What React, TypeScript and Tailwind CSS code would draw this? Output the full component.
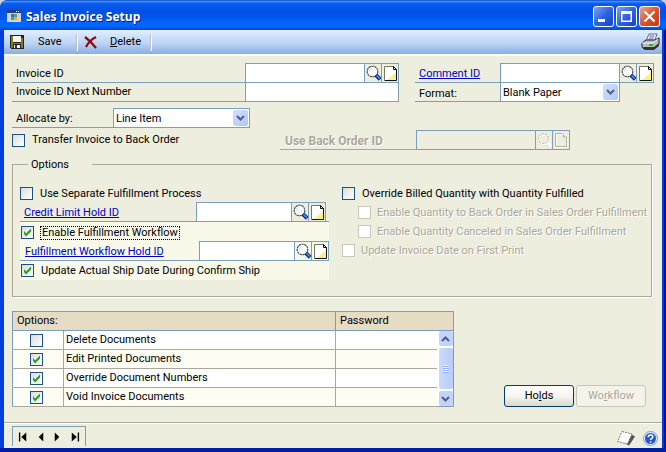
import type { ReactNode } from "react";

function LookupIcon() {
  return (
    <svg width="15" height="16" viewBox="0 0 15 16" aria-hidden="true">
      <circle cx="6.5" cy="6.5" r="5.3" fill="#fff" stroke="#3c4150" strokeWidth="1.1" strokeDasharray="2.4 .5" />
      <path d="M3.5 6.5a3 3 0 0 1 2.5-3" stroke="#c4d8ee" fill="none" />
      <path d="M10 10.200l4.200 4.200" stroke="#0a2a80" strokeWidth="4" />
      <path d="M10.600 10.400l3.200 3.200" stroke="#3f8fe8" strokeWidth="1.800" />
    </svg>
  );
}

function NoteIcon() {
  return (
    <svg width="13" height="15" viewBox="0 0 13 15" aria-hidden="true">
      <path d="M.5 .5h8l4 4v10H.5z" fill="#fff" />
      <path d="M12 6v8H3z" fill="#fbf08a" />
      <path d="M.5 14V.5h8" stroke="#77776a" fill="none" />
      <path d="M8.500 .5h1l3 3v11H.5M9.500 .5v3h3" stroke="#111" fill="none" />
    </svg>
  );
}

function DisabledLookupIcon() {
  return (
    <svg width="15" height="16" viewBox="0 0 15 16" aria-hidden="true">
      <circle cx="7.5" cy="7.5" r="5" fill="none" stroke="#fff" />
      <circle cx="6.5" cy="6.5" r="5" fill="none" stroke="#b3b09c" strokeDasharray="2 1.5" />
      <path d="M11 11l3 3" stroke="#fff" strokeWidth="2" />
    </svg>
  );
}

function DisabledNoteIcon() {
  return (
    <svg width="13" height="15" viewBox="0 0 13 15" aria-hidden="true">
      <path d="M1.500 13.500V1.500h7M12.500 5v9.500H1" stroke="#fff" fill="none" />
      <path d="M.5 13.500V.5h7M11.500 4v9.500H1M8.500 1v3h3" stroke="#b3b09c" fill="none" />
    </svg>
  );
}

function LookupButtons({ name, disabled = false }: { name: string; disabled?: boolean }) {
  return (
    <>
      <button type="button" disabled={disabled} aria-label={`Look up ${name}`} className="flex w-[17px] shrink-0 items-center justify-center border-l border-[#7f9db9]">
        {disabled ? <DisabledLookupIcon /> : <LookupIcon />}
      </button>
      <button type="button" disabled={disabled} aria-label={`Note for ${name}`} className="flex w-[18px] shrink-0 items-center justify-center border-x border-[#7f9db9]">
        {disabled ? <DisabledNoteIcon /> : <NoteIcon />}
      </button>
    </>
  );
}

type CheckProps = { label: string; checked?: boolean; disabled?: boolean; focused?: boolean };

function Box({ id, label, checked = false, disabled = false }: { id?: string; label?: string; checked?: boolean; disabled?: boolean }) {
  return (
    <span className="grid size-[13px] shrink-0">
      <input
        id={id}
        type="checkbox"
        aria-label={label}
        defaultChecked={checked}
        disabled={disabled}
        className="peer col-start-1 row-start-1 size-[13px] appearance-none border border-[#1c5180] bg-linear-to-br from-[#dcdcd7] to-white outline-none disabled:border-[#cac8bb] disabled:from-white"
      />
      <svg viewBox="0 0 13 13" aria-hidden="true" className="pointer-events-none invisible col-start-1 row-start-1 size-[13px] peer-checked:visible">
        <path d="M3 5v3l2 2.500 5-5v-3l-5 5z" fill="#21a121" />
      </svg>
    </span>
  );
}

function Check({ label, checked, disabled, focused }: CheckProps) {
  const id = label.toLowerCase().replace(/ /g, "-");
  return (
    <div className="flex h-[19px] items-center gap-1.5">
      <Box id={id} checked={checked} disabled={disabled} />
      <label
        htmlFor={id}
        className={
          disabled
            ? "text-[#aca899] [text-shadow:1px_1px_0_#fff]"
            : focused
              ? "border border-dotted border-black px-px leading-3"
              : "px-px"
        }
      >
        {label}
      </label>
    </div>
  );
}

function Select({ id, value }: { id: string; value: string }) {
  return (
    <span className="grid flex-1 border-x border-[#7f9db9] bg-white">
      <select id={id} className="peer col-start-1 row-start-1 w-full appearance-none bg-transparent pt-px pl-0.5 outline-none">
        <option>{value}</option>
      </select>
      <span className="pointer-events-none col-start-1 row-start-1 mr-px flex h-4 w-[15px] items-center justify-center self-center justify-self-end rounded-xs bg-linear-to-br from-[#d3e0fd] to-[#b1c6f5]">
        <svg width="9" height="6" viewBox="0 0 9 6" aria-hidden="true">
          <path d="M1 1l3.500 3.500L8 1" fill="none" stroke="#4d6185" strokeWidth="2" />
        </svg>
      </span>
    </span>
  );
}

const textBox = "min-w-0 flex-1 border-l border-[#7f9db9] bg-white px-1 outline-none";
const firstRow = "flex h-5 border-b border-[#7f9db9]";
const topEdge = "flex min-w-0 flex-1 border-t border-[#7f9db9]";
const link = "text-[#0000c8] underline underline-offset-1";

function WindowButton({ label, close = false, children }: { label: string; close?: boolean; children: ReactNode }) {
  return (
    <button
      type="button"
      aria-label={label}
      className={
        close
          ? "flex size-[21px] items-center justify-center rounded-[3px] border border-white bg-linear-to-br from-[#f0a088] via-[#e0502c] to-[#c03a14]"
          : "flex size-[21px] items-center justify-center rounded-[3px] border border-white bg-linear-to-br from-[#7da2f4] via-[#2f62e0] to-[#1543c4]"
      }
    >
      <svg width="19" height="19" viewBox="0 0 19 19" aria-hidden="true">{children}</svg>
    </button>
  );
}

function ToolSeparator() {
  return <span className="h-[17px] w-0.5 border-r border-white bg-[#b9c3c8]" />;
}

const documents = [
  { name: "Delete Documents", on: false },
  { name: "Edit Printed Documents", on: true },
  { name: "Override Document Numbers", on: true },
  { name: "Void Invoice Documents", on: true },
];

const records = [
  { name: "First record", d: "M1 1h1.500v10H1zM9 1v10L3.500 6z" },
  { name: "Previous record", d: "M9 1v10L4 6z" },
  { name: "Next record", d: "M3 1v10l5-5z" },
  { name: "Last record", d: "M9.500 1H11v10H9.500zM3 1v10l5.500-5z" },
];

export default function App() {
  return (
    <div className="min-h-screen bg-[#c9cdd6] font-['Roboto','Liberation_Sans',sans-serif] text-[11px] leading-[14px] text-black">
      <div className="flex min-h-screen flex-col overflow-hidden rounded-t-lg bg-[#003fdf]">
        <header className="flex h-[30px] items-center bg-[linear-gradient(180deg,#0a49c8_0%,#3a8cf8_5%,#0a5cec_12%,#0050e6_35%,#0055ee_60%,#0066ff_75%,#0066ff_88%,#0046d0_100%)] pr-1.5 pl-[7px]">
          <svg width="14" height="12" viewBox="0 0 14 12" aria-hidden="true" shapeRendering="crispEdges" className="mt-0.5">
            <path d="M0 0h14v12H0z" fill="#d8d4c4" />
            <path d="M0 0h14v3H0z" fill="#2b3c78" />
            <path d="M9 1h1v1H9zM11 1h1v1h-1z" fill="#fff" />
            <path d="M4 4h3v3H4z" fill="#2878c8" />
            <path d="M7 4h3v3H7z" fill="#4aa0b0" />
            <path d="M4 7h3v3H4z" fill="#3c9ad8" />
            <path d="M7 7h3v3H7z" fill="#e8b020" />
          </svg>
          <h1 className="ml-[5px] flex-1 pt-1 font-['Open_Sans','Liberation_Sans',sans-serif] text-xs leading-4 font-bold text-white [text-shadow:1px_1px_0_#0a1883]">
            Sales Invoice Setup
          </h1>
          <div className="flex gap-0.5 pt-0.5">
            <WindowButton label="Minimize">
              <path d="M4 12h7v3H4z" fill="#fff" />
            </WindowButton>
            <WindowButton label="Maximize">
              <path d="M4 4h11v11H4zM5.500 7v6.500h8V7z" fill="#fff" fillRule="evenodd" />
            </WindowButton>
            <WindowButton label="Close" close>
              <path d="M4.500 4.500l10 10M14.500 4.500l-10 10" stroke="#fff" strokeWidth="2.200" />
            </WindowButton>
          </div>
        </header>

        <div className="flex flex-1 flex-col border-b-4 border-[#001fa8] px-1 shadow-[inset_-2px_0_0_#00148c]">
          <div className="flex flex-1 flex-col bg-[#eeeedf]">
            <div role="toolbar" aria-label="Commands" className="flex h-[26px] items-center border-b-2 border-white bg-linear-to-b from-[#e2effe] via-[#bcd3f5] via-55% to-[#8caede] px-1.5">
              <button type="button" className="flex w-[66px] items-center">
                <svg width="14" height="14" viewBox="0 0 14 14" aria-hidden="true" shapeRendering="crispEdges">
                  <path d="M0 0h14v14H1L0 13z" fill="#222" />
                  <path d="M1 1h2v12H1zM11 3h2v10h-2zM2 8h10v1H2z" fill="#7c7c20" />
                  <path d="M3 1h8v6H3z" fill="#f2f2ee" />
                  <path d="M4 10h6v3H4z" fill="#f2f2ee" />
                  <path d="M5 10h2v3H5z" fill="#333" />
                </svg>
                <span className="pl-3.5">Save</span>
              </button>
              <ToolSeparator />
              <button type="button" className="flex w-[72px] items-center pl-1.5">
                <svg width="14" height="13" viewBox="0 0 14 13" aria-hidden="true">
                  <path d="M1 1c4 3 8 7 11 11M12 1C8 3 4 7 2 11" stroke="#8c0a0a" strokeWidth="2.200" fill="none" />
                </svg>
                <span className="pl-3"><u>D</u>elete</span>
              </button>
              <ToolSeparator />
              <button type="button" aria-label="Print" className="-mr-1 ml-auto">
                <svg width="19" height="18" viewBox="0 0 19 18" aria-hidden="true">
                  <path d="M5 8l3-7h8l-3 8z" fill="#fff" stroke="#234" strokeWidth=".7" />
                  <path d="M8.500 3h5M7.800 5h5M7 7h5" stroke="#3b62c8" />
                  <path d="M1 10l4-3h9l4-2v6l-5 5H3l-2-2z" fill="#b8bcc0" stroke="#222" />
                  <path d="M1 10h11l5-4" fill="none" stroke="#f4f4f4" />
                  <path d="M2 14h11l5-4v3l-5 4H4z" fill="#333" />
                  <path d="M8 12h4" stroke="#1fb81f" strokeWidth="2" />
                </svg>
              </button>
            </div>

            <main className="flex flex-1 flex-col px-2 pt-[7px]">
              <div className="flex items-start gap-4">
                <div className="min-w-0 flex-1">
                  <div className={firstRow}>
                    <label htmlFor="invoice" className="w-[233px] pt-1 pl-1">Invoice ID</label>
                    <div className={topEdge}>
                      <input id="invoice" className={textBox} />
                      <LookupButtons name="Invoice ID" />
                    </div>
                  </div>
                  <div className="flex h-[19px] border-b border-[#7f9db9]">
                    <label htmlFor="next" className="w-[233px] pt-0.5 pl-1">Invoice ID Next Number</label>
                    <input id="next" className="min-w-0 flex-1 border-x border-[#7f9db9] bg-white px-1 outline-none" />
                  </div>
                </div>
                <div className="w-[239px] shrink-0">
                  <div className={firstRow}>
                    <label htmlFor="comment" className="w-[85px] pt-1 pl-1"><a href="#comment" className={link}>Comment ID</a></label>
                    <div className={topEdge}>
                      <input id="comment" className={textBox} />
                      <LookupButtons name="Comment ID" />
                    </div>
                  </div>
                  <div className="mr-[34px] flex h-[19px] border-b border-[#7f9db9]">
                    <label htmlFor="format" className="w-[85px] pt-1 pl-1">Format:</label>
                    <Select id="format" value="Blank Paper" />
                  </div>
                </div>
              </div>

              <div className="mt-1.5 flex h-5 w-[238px] border-b border-[#7f9db9]">
                <label htmlFor="allocate" className="w-[101px] pt-1 pl-1">Allocate by:</label>
                <div className={topEdge}>
                  <Select id="allocate" value="Line Item" />
                </div>
              </div>

              <div className="mt-0.5 flex items-center">
                <div className="w-[268px]">
                  <Check label="Transfer Invoice to Back Order" />
                </div>
                <div className="flex h-5 w-[290px] border-b border-[#aca899]">
                  <label htmlFor="backorder" className="w-[136px] pt-1 pl-[5px] text-xs leading-[14px] font-bold text-[#aca899] [text-shadow:1px_1px_0_#fff]">
                    Use Back Order ID
                  </label>
                  <div className="-mb-px flex min-w-0 flex-1 border-y border-[#7f9db9]">
                    <input id="backorder" disabled className="min-w-0 flex-1 border-l border-[#7f9db9] bg-transparent px-1" />
                    <LookupButtons name="Back Order ID" disabled />
                  </div>
                </div>
              </div>

              <fieldset className="mt-[7px] mr-0.5 flex border border-[#aca899] pt-3 pb-4 pl-[7px] shadow-[1px_1px_0_#fff]">
                <legend className="ml-2 w-16 bg-[#eeeedf] pl-[3px] leading-[15px]">Options</legend>
                <div className="w-[309px]">
                  <Check label="Use Separate Fulfillment Process" />
                  <div className="-mt-px flex h-5 border-b border-[#7f9db9] pr-[3px]">
                    <label htmlFor="credit" className="w-44 pt-1 pl-1"><a href="#credit" className={link}>Credit Limit Hold ID</a></label>
                    <div className={topEdge}>
                      <input id="credit" className={textBox} />
                      <LookupButtons name="Credit Limit Hold ID" />
                    </div>
                  </div>
                  <div className="bg-[#f9f9ea] pt-px">
                    <div className="pl-px">
                      <Check label="Enable Fulfillment Workflow" checked focused />
                    </div>
                    <div className="-mt-px flex h-5 border-b border-[#7f9db9]">
                      <label htmlFor="hold" className="w-[179px] pt-1 pl-[5px]"><a href="#hold" className={link}>Fulfillment Workflow Hold ID</a></label>
                      <div className={topEdge}>
                        <input id="hold" className={textBox} />
                        <LookupButtons name="Fulfillment Workflow Hold ID" />
                      </div>
                    </div>
                    <div className="pl-px">
                      <Check label="Update Actual Ship Date During Confirm Ship" checked />
                    </div>
                  </div>
                </div>
                <div className="ml-[13px] flex-1">
                  <Check label="Override Billed Quantity with Quantity Fulfilled" />
                  <div className="pl-4">
                    <Check label="Enable Quantity to Back Order in Sales Order Fulfillment" disabled />
                    <Check label="Enable Quantity Canceled in Sales Order Fulfillment" disabled />
                  </div>
                  <Check label="Update Invoice Date on First Print" disabled />
                </div>
              </fieldset>

              <div className="mt-3.5 flex items-end justify-between">
                <table className="w-[442px] table-fixed border-collapse border border-[#7f9db9] bg-white text-left">
                  <colgroup>
                    <col className="w-[51px]" />
                    <col />
                    <col className="w-[101px]" />
                    <col className="w-[17px]" />
                  </colgroup>
                  <thead>
                    <tr className="h-[19px] bg-[#e6dcc4]">
                      <th colSpan={2} className="border border-[#7f9db9] px-1 font-normal">Options:</th>
                      <th colSpan={2} className="border border-[#7f9db9] px-1 font-normal">Password</th>
                    </tr>
                  </thead>
                  <tbody>
                    {documents.map((row, i) => (
                      <tr key={row.name} className="h-[19px] even:bg-[#fdfdf4]">
                        <td className="border-r border-b border-[#aca899] p-0">
                          <div className="flex justify-center pr-1"><Box label={row.name} checked={row.on} /></div>
                        </td>
                        <td className="border-r border-b border-[#aca899] px-0.5 py-0">{row.name}</td>
                        <td className="border-b border-[#aca899] p-0">
                          <input type="password" aria-label={`${row.name} password`} className="block h-4 w-full px-1 outline-none" />
                        </td>
                        {i === 0 && (
                          <td rowSpan={4} aria-hidden="true" className="h-px bg-white p-0">
                            <div className="flex h-full flex-col gap-0.5 pl-0.5">
                              <span className="flex h-[15px] items-center justify-center rounded-xs bg-[#c3d3fb]">
                                <svg width="9" height="6" viewBox="0 0 9 6"><path d="M1 5l3.500-3.500L8 5" fill="none" stroke="#4d6185" strokeWidth="2" /></svg>
                              </span>
                              <span className="flex flex-1 items-center justify-center rounded-xs bg-linear-to-r from-[#cbdafd] to-[#b9ccf8]">
                                <svg width="6" height="8" viewBox="0 0 6 8"><path d="M0 .5h6M0 2.500h6M0 4.500h6M0 6.500h6" stroke="#eef4fe" /><path d="M0 1.500h6M0 3.500h6M0 5.500h6M0 7.500h6" stroke="#8cb0f8" /></svg>
                              </span>
                              <span className="flex h-[15px] items-center justify-center rounded-xs bg-[#c3d3fb]">
                                <svg width="9" height="6" viewBox="0 0 9 6"><path d="M1 1l3.500 3.500L8 1" fill="none" stroke="#4d6185" strokeWidth="2" /></svg>
                              </span>
                            </div>
                          </td>
                        )}
                      </tr>
                    ))}
                  </tbody>
                </table>
                <div className="flex gap-0.5 pr-2">
                  <button type="button" className="h-[22px] w-[70px] rounded-[3px] border border-[#003c74] bg-linear-to-b from-white via-[#f6f5ef] to-[#dcd8cc]">
                    Ho<u>l</u>ds
                  </button>
                  <button type="button" disabled className="h-[22px] w-[70px] rounded-[3px] border border-[#c9c7ba] bg-[#f4f3ea] text-[#aca899]">
                    Wo<u>r</u>kflow
                  </button>
                </div>
              </div>
            </main>

            <footer className="mt-3 flex h-[26px] items-end justify-between border-t border-[#aca899] px-2 pb-0.5 shadow-[inset_0_1px_0_#fff]">
              <nav aria-label="Records" className="flex h-5 items-center gap-1.5 border-x border-t border-[#7f9db9] px-[5px]">
                {records.map((r) => (
                  <button key={r.name} type="button" aria-label={r.name}>
                    <svg width="11" height="12" viewBox="0 0 12 12" aria-hidden="true"><path d={r.d} /></svg>
                  </button>
                ))}
              </nav>
              <div className="flex items-center gap-2">
                <button type="button" aria-label="Window note">
                  <svg width="19" height="16" viewBox="0 0 19 16" aria-hidden="true">
                    <path d="M14 3.500l5 3-6 9-4-2z" fill="#55534c" />
                    <path d="M6 1.500l10 2.500-4.500 10L1.500 11.500z" fill="#fff" stroke="#777" strokeDasharray="2 1" />
                  </svg>
                </button>
                <button type="button" aria-label="Help" className="-mr-1">
                  <svg width="15" height="15" viewBox="0 0 15 15" aria-hidden="true">
                    <circle cx="7.500" cy="7.500" r="7" fill="#e6eefc" stroke="#7f9cd8" />
                    <circle cx="7.500" cy="7.500" r="5.500" fill="#2456c4" />
                    <path d="M5.200 6.200c0-3 4.600-3 4.600-.4 0 1.600-2.200 1.500-2.200 3.200M7.600 10.200v1.500" stroke="#fff" strokeWidth="1.500" fill="none" />
                  </svg>
                </button>
              </div>
            </footer>
          </div>
        </div>
      </div>
    </div>
  );
}
